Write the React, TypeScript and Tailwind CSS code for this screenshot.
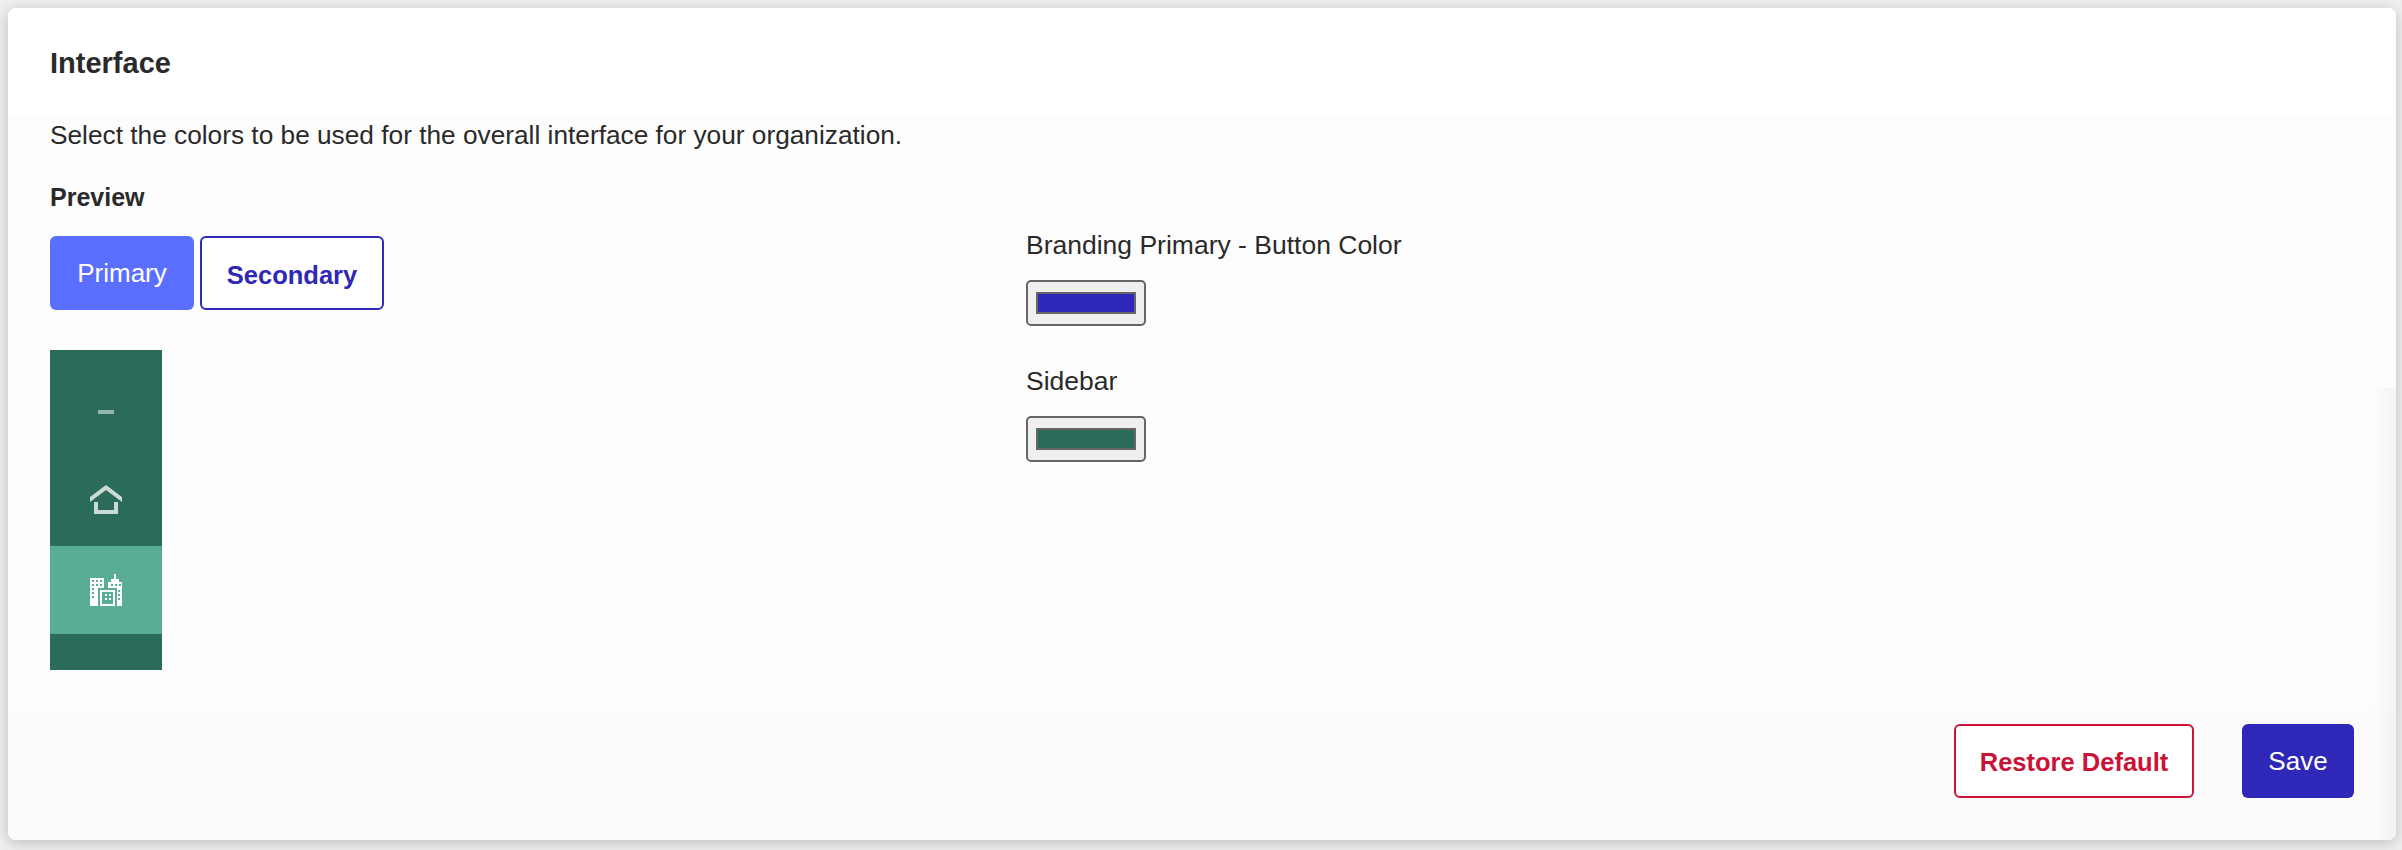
const font = { fontFamily: '"Liberation Sans", Arial, sans-serif' };

function HomeIcon() {
  return (
    <svg width="32" height="30" viewBox="0 0 32 30" className="opacity-75">
      <path d="M0 12 L16 0 L32 12 V17 L16 5 L0 17 Z" fill="#fff" />
      <path d="M4 17 H8 V25 H24 V17 H28 V29 H4 Z" fill="#fff" />
    </svg>
  );
}

function BuildingsIcon() {
  const green = "#59ad95";
  return (
    <svg width="32" height="32" viewBox="0 0 32 32" shapeRendering="crispEdges">
      <path d="M0 4 H14 V32 H0 Z M18 8 H21 V5 H24 V0 H26 V5 H29 V8 H32 V32 H18 Z" fill="#fff" />
      {[
        [2, 6], [6, 6], [10, 6], [2, 10], [6, 10], [10, 10],
        [2, 14], [2, 18], [2, 22], [21, 10], [25, 10], [29, 10],
        [28, 16], [28, 20], [28, 24],
      ].map(([x, y]) => (
        <rect key={`${x}-${y}`} x={x} y={y} width="2" height="2" fill={green} />
      ))}
      <path d="M8 32 V14 H27 V32 H25 V16 H10 V32 Z" fill={green} />
      <rect x="10" y="16" width="15" height="16" fill="#fff" />
      <rect x="12" y="18" width="11" height="12" fill={green} />
      {[
        [15, 20], [19, 20], [15, 24], [19, 24],
      ].map(([x, y]) => (
        <rect key={`d${x}-${y}`} x={x} y={y} width="2" height="2" fill="#fff" />
      ))}
    </svg>
  );
}

function Swatch({ color }: { color: string }) {
  return (
    <div className="flex h-[46px] w-[120px] items-center justify-center rounded-[5px] border-2 border-[#666] bg-[#efefef]">
      <div className="h-[22px] w-[100px] border-2 border-[#666]" style={{ backgroundColor: color }} />
    </div>
  );
}

export default function App() {
  return (
    <div className="h-[850px] overflow-hidden bg-[#eeeeee] pt-2 pr-1.5 pl-2" style={font}>
      <div className="relative flex h-[832px] flex-col overflow-hidden rounded-lg bg-white shadow-[0_3px_14px_rgba(0,0,0,0.2)]">
        <div className="flex h-[107px] shrink-0 items-start bg-white pt-[37px] pl-[42px]">
          <h2 className="text-[29px] leading-9 font-semibold text-[#2a2a2a]">Interface</h2>
        </div>
        <div className="flex-1 bg-[#fdfdfd] pl-[42px]">
          <p className="pt-[2px] text-[26.25px] leading-[36px] text-[#2a2a2a]">
            Select the colors to be used for the overall interface for your organization.
          </p>
          <div className="flex">
            <div className="w-[976px] shrink-0">
              <h3 className="mt-[26px] text-[25px] leading-[36px] font-semibold text-[#2a2a2a]">Preview</h3>
              <div className="mt-[21px] flex gap-1.5">
                <button className="h-[74px] w-36 rounded-[6px] bg-[#5a6eff] text-[26px] text-white">Primary</button>
                <button className="h-[74px] w-[184px] rounded-[6px] border-2 border-[#2f27b7] bg-white pt-1 text-[25.5px] font-semibold text-[#2f27b7]">
                  Secondary
                </button>
              </div>
              <div className="mt-10 flex h-80 w-28 flex-col items-center bg-[#2b6b59]">
                <div className="flex h-[196px] w-full flex-col items-center">
                  <div className="mt-[60px] h-1 w-4 bg-white opacity-50" />
                  <div className="mt-[71px]">
                    <HomeIcon />
                  </div>
                </div>
                <div className="flex h-[88px] w-full items-center justify-center bg-[#59ad95]">
                  <BuildingsIcon />
                </div>
              </div>
            </div>
            <div className="pt-[74px]">
              <div className="text-[26.5px] leading-[36px] text-[#2a2a2a]">Branding Primary - Button Color</div>
              <div className="mt-[17px]">
                <Swatch color="#2f27b7" />
              </div>
              <div className="mt-[37px] text-[26.5px] leading-[36px] text-[#2a2a2a]">Sidebar</div>
              <div className="mt-[17px]">
                <Swatch color="#2b6b59" />
              </div>
            </div>
          </div>
        </div>
        <div className="flex h-[130px] shrink-0 items-start justify-end gap-12 bg-[#fbfbfb] pt-[14px] pr-[42px]">
          <button className="h-[74px] w-60 rounded-[6px] border-2 border-[#cb1237] bg-white pt-0.5 text-[25.5px] font-semibold text-[#cb1237]">
            Restore Default
          </button>
          <button className="h-[74px] w-28 rounded-[6px] bg-[#2f27b7] text-[26px] text-white">Save</button>
        </div>
        {/* faint shadow of something sliding in from the right */}
        <div className="pointer-events-none absolute top-[380px] right-0 bottom-0 w-6 bg-gradient-to-l from-black/[0.035] to-transparent" />
      </div>
    </div>
  );
}
